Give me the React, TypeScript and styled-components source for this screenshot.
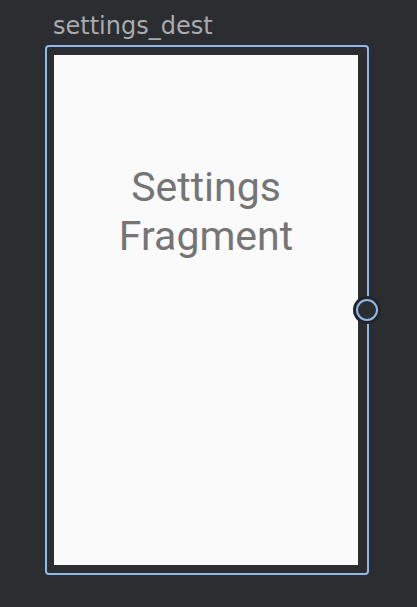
import React from 'react';
import styled, { createGlobalStyle } from 'styled-components';

const GlobalStyle = createGlobalStyle`
  html, body {
    margin: 0;
    padding: 0;
    background: #2b2d30;
  }
`;

const Canvas = styled.div`
  width: 417px;
  height: 607px;
  box-sizing: border-box;
  padding: 12px 0 0 45px;
  background: #2b2d30;
`;

const DestLabel = styled.div`
  margin-left: 8px;
  margin-bottom: 5px;
  font-family: 'DejaVu Sans', sans-serif;
  font-size: 24px;
  line-height: 28px;
  color: #a9abae;
`;

const DestFrame = styled.div`
  position: relative;
  width: 324px;
  height: 530px;
  box-sizing: border-box;
  border: 2px solid #8fb8ea;
  border-radius: 4px;
  padding: 8px 9px 8px 7px;
`;

const Screen = styled.div`
  height: 100%;
  background: #fafafa;
  display: flex;
  flex-direction: column;
  align-items: center;
  padding-top: 108px;
  box-sizing: border-box;
`;

const ScreenTitle = styled.div`
  font-family: Roboto, sans-serif;
  font-size: 41px;
  line-height: 49px;
  color: #757575;
  text-align: center;
`;

// connection handle sitting on the right edge of the destination
const Handle = styled.div`
  position: absolute;
  right: -14px;
  top: 50%;
  width: 28px;
  height: 28px;
  margin-top: -14px;
  border-radius: 50%;
  background: #232427;
  display: flex;
  align-items: center;
  justify-content: center;

  &::after {
    content: '';
    width: 18px;
    height: 18px;
    border-radius: 50%;
    border: 2px solid #8fb8ea;
    background: #2b2d30;
  }
`;

export default function App() {
  return (
    <>
      <GlobalStyle />
      <Canvas>
        <DestLabel>settings_dest</DestLabel>
        <DestFrame>
          <Screen>
            <ScreenTitle>
              Settings
              <br />
              Fragment
            </ScreenTitle>
          </Screen>
          <Handle />
        </DestFrame>
      </Canvas>
    </>
  );
}
